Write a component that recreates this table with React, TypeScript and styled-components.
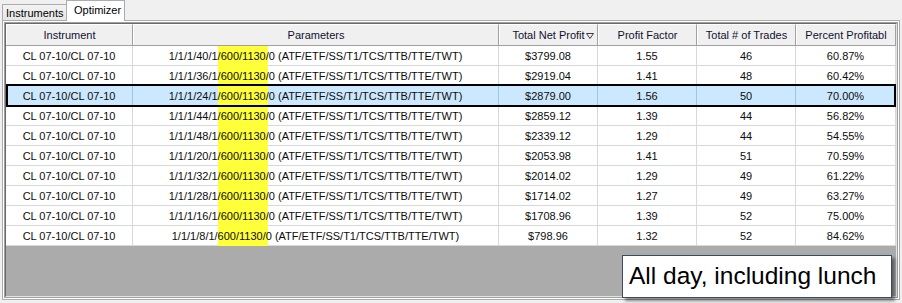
import React from "react";
import styled, { createGlobalStyle } from "styled-components";

const Global = createGlobalStyle`
  html, body { margin: 0; padding: 0; background: #f0f0f0; }
  body { font-family: "Liberation Sans", Arial, sans-serif; font-size: 11px; color: #000; }
  * { box-sizing: border-box; }
`;

const Window = styled.div`
  width: 902px;
  height: 303px;
  background: #f0f0f0;
  overflow: hidden;
`;

const TabStrip = styled.div`
  display: flex;
  align-items: flex-end;
  height: 20px;
  padding-left: 2px;
  position: relative;
  z-index: 2;
`;

const Tab = styled.div<{ $active?: boolean }>`
  display: flex;
  align-items: center;
  font-size: 11px;
  border: 1px solid #acacac;
  border-bottom: none;
  background: ${(p) => (p.$active ? "#ffffff" : "linear-gradient(#f3f3f3, #e6e6e6)")};
  height: ${(p) => (p.$active ? "21px" : "16px")};
  margin-bottom: ${(p) => (p.$active ? "-1px" : "0")};
  margin-left: ${(p) => (p.$active ? "-1px" : "0")};
  padding: ${(p) => (p.$active ? "0 6px 3px 7px" : "1px 4px 0 3px")};
  width: ${(p) => (p.$active ? "59px" : "65px")};
`;

const Panel = styled.div`
  position: relative;
  margin-left: 2px;
  width: 898px;
  height: 280px;
  background: #ffffff;
  border: 1px solid #acacac;
  padding: 1px;
`;

const GridFrame = styled.div`
  height: 100%;
  border: 1px solid #a0a0a0;
  display: flex;
  flex-direction: column;
`;

const GridInner = styled.div`
  flex: 1;
  display: flex;
  flex-direction: column;
  border-left: 1px solid #696969;
  border-top: 1px solid #696969;
  border-right: 1px solid #e3e3e3;
  border-bottom: 1px solid #e3e3e3;
`;

const cols = [127, 366, 99, 99, 99, 100];

const HeaderRow = styled.div`
  display: flex;
  height: 22px;
  border-bottom: 1px solid #a0a0a0;
  background: #f0f0f0;
`;

const HeaderCell = styled.div<{ $w: number }>`
  position: relative;
  width: ${(p) => p.$w}px;
  flex: none;
  display: flex;
  align-items: center;
  justify-content: center;
  border-left: 1px solid #ffffff;
  border-top: 1px solid #ffffff;
  border-right: 1px solid #a0a0a0;
  font-size: 11px;
  color: #101030;
  white-space: nowrap;
  overflow: hidden;
`;

const SortGlyph = styled.svg`
  position: absolute;
  right: 3px;
  top: 8px;
`;

const Body = styled.div`
  position: relative;
  z-index: 0;
  display: flex;
  flex-direction: column;
`;

const Row = styled.div<{ $sel?: boolean }>`
  display: flex;
  height: 20px;
  background: ${(p) => (p.$sel ? "#cce8ff" : "#ffffff")};
`;

const Cell = styled.div<{ $w: number; $sel?: boolean }>`
  width: ${(p) => p.$w}px;
  flex: none;
  display: flex;
  align-items: center;
  justify-content: center;
  border-right: 1px solid ${(p) => (p.$sel ? "#99c9ef" : "#d8d8d8")};
  border-bottom: 1px solid ${(p) => (p.$sel ? "#99c9ef" : "#d8d8d8")};
  white-space: nowrap;
  overflow: hidden;
`;

const CellText = styled.span`
  position: relative;
  z-index: 2;
  font-size: 11px;
  color: #0c0c0c;
`;

const Highlight = styled.div`
  position: absolute;
  z-index: 1;
  top: 0;
  bottom: 0;
  left: 212px;
  width: 50px;
  background: #ffff3a;
`;

const SelectionFrame = styled.div<{ $index: number }>`
  position: absolute;
  z-index: 3;
  left: 0;
  right: 0;
  top: ${(p) => p.$index * 20 - 2}px;
  height: 23px;
  border: 2px solid #000;
  pointer-events: none;
`;

const EmptyArea = styled.div`
  flex: 1;
  background: #ababab;
`;

const Tooltip = styled.div`
  position: absolute;
  left: 619px;
  top: 234px;
  width: 270px;
  height: 43px;
  background: #ffffff;
  border: 1px solid #3a4a60;
  box-shadow: 3px 3px 3px rgba(0, 0, 0, 0.45);
  display: flex;
  align-items: center;
  padding: 0 0 2px 6px;
  font-size: 24.5px;
  color: #000;
  white-space: nowrap;
  z-index: 5;
`;

const rows = [
  ["40", "$3799.08", "1.55", "46", "60.87%"],
  ["36", "$2919.04", "1.41", "48", "60.42%"],
  ["24", "$2879.00", "1.56", "50", "70.00%"],
  ["44", "$2859.12", "1.39", "44", "56.82%"],
  ["48", "$2339.12", "1.29", "44", "54.55%"],
  ["20", "$2053.98", "1.41", "51", "70.59%"],
  ["32", "$2014.02", "1.29", "49", "61.22%"],
  ["28", "$1714.02", "1.27", "49", "63.27%"],
  ["16", "$1708.96", "1.39", "52", "75.00%"],
  ["8", "$798.96", "1.32", "52", "84.62%"],
];

const headers = [
  "Instrument",
  "Parameters",
  "Total Net Profit",
  "Profit Factor",
  "Total # of Trades",
  "Percent Profitabl",
];

const SELECTED = 2;

export default function App() {
  return (
    <Window>
      <Global />
      <TabStrip>
        <Tab>Instruments</Tab>
        <Tab $active>Optimizer</Tab>
      </TabStrip>
      <Panel>
        <GridFrame>
          <GridInner>
            <HeaderRow>
              {headers.map((h, i) => (
                <HeaderCell key={h} $w={cols[i]}>
                  {h}
                  {i === 2 && (
                    <SortGlyph width="8" height="6" viewBox="0 0 8 6">
                      <path d="M0.5 0.5 H7.5 L4 5.5 Z" fill="none" stroke="#3c3c3c" strokeWidth="1" />
                    </SortGlyph>
                  )}
                </HeaderCell>
              ))}
            </HeaderRow>
            <Body>
              {rows.map((r, idx) => {
                const sel = idx === SELECTED;
                const values = [
                  "CL 07-10/CL 07-10",
                  `1/1/1/${r[0]}/1/600/1130/0 (ATF/ETF/SS/T1/TCS/TTB/TTE/TWT)`,
                  r[1],
                  r[2],
                  r[3],
                  r[4],
                ];
                return (
                  <Row key={idx} $sel={sel}>
                    {values.map((v, i) => (
                      <Cell key={i} $w={cols[i]} $sel={sel}>
                        <CellText>{v}</CellText>
                      </Cell>
                    ))}
                  </Row>
                );
              })}
              <Highlight />
              <SelectionFrame $index={SELECTED} />
            </Body>
            <EmptyArea />
          </GridInner>
        </GridFrame>
        <Tooltip>All day, including lunch</Tooltip>
      </Panel>
    </Window>
  );
}
